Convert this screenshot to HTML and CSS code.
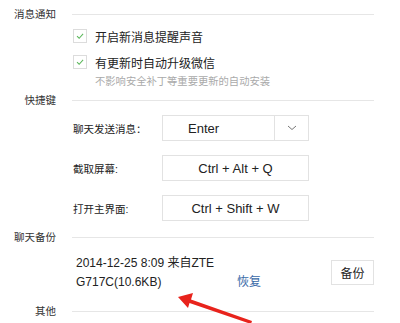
FILE: index.html
```html
<!DOCTYPE html>
<html lang="zh-CN">
<head>
<meta charset="utf-8">
<title>设置</title>
<link rel="stylesheet" href="styles.css">
</head>
<body>
<div class="page">
  <div class="sec-head"><span class="sec-label">消息通知</span><span class="sec-line"></span></div>
  <div class="check-row first">
    <span class="checkbox"><svg width="14" height="14" viewBox="0 0 14 14"><path d="M3.5 7.2 L6 9.6 L10.6 4.6" fill="none" stroke="#5cb85c" stroke-width="1.2"/></svg></span>
    <span class="check-text">开启新消息提醒声音</span>
  </div>
  <div class="check-row second">
    <span class="checkbox"><svg width="14" height="14" viewBox="0 0 14 14"><path d="M3.5 7.2 L6 9.6 L10.6 4.6" fill="none" stroke="#5cb85c" stroke-width="1.2"/></svg></span>
    <span class="check-text">有更新时自动升级微信</span>
  </div>
  <div class="hint">不影响安全补丁等重要更新的自动安装</div>

  <div class="sec-head head2"><span class="sec-label">快捷键</span><span class="sec-line"></span></div>
  <div class="key-row first-key">
    <span class="key-label">聊天发送消息：</span>
    <div class="key-box select">
      <span class="key-value left">Enter</span>
      <span class="key-drop"><svg width="10" height="6" viewBox="0 0 10 6"><path d="M1 1 L5 4.5 L9 1" fill="none" stroke="#777" stroke-width="1"/></svg></span>
    </div>
  </div>
  <div class="key-row">
    <span class="key-label">截取屏幕:</span>
    <div class="key-box"><span class="key-value">Ctrl + Alt + Q</span></div>
  </div>
  <div class="key-row">
    <span class="key-label">打开主界面:</span>
    <div class="key-box"><span class="key-value">Ctrl + Shift + W</span></div>
  </div>

  <div class="sec-head head3"><span class="sec-label">聊天备份</span><span class="sec-line"></span></div>
  <div class="backup">
    <div class="backup-text">2014-12-25 8:09 来自ZTE<br>G717C(10.6KB)</div>
    <a class="restore">恢复</a>
    <span class="spacer"></span>
    <button class="backup-btn">备份</button>
  </div>

  <div class="sec-head"><span class="sec-label">其他</span><span class="sec-line"></span></div>

  <svg class="arrow" width="400" height="323" viewBox="0 0 400 323">
    <path d="M178 297 L193 293 L191 299.5 L252 321 L251 324 L189.5 303 L188 308 Z" fill="#e8231c"/>
  </svg>
</div>
</body>
</html>
```

FILE: styles.css
```css
html, body {
  margin: 0;
  padding: 0;
  background: #ffffff;
}
body {
  width: 400px;
  height: 323px;
  overflow: hidden;
  font-family: "Liberation Sans", "Noto Sans CJK SC", sans-serif;
  color: #222;
}
.page {
  position: relative;
  padding-top: 7px;
  height: 316px;
}
.sec-head {
  display: flex;
  align-items: center;
  height: 14px;
}
.sec-label {
  width: 56px;
  text-align: right;
  font-size: 10.5px;
  line-height: 14px;
  color: #333;
  white-space: nowrap;
}
.sec-line {
  flex: 1;
  height: 1px;
  background: #e6e6e6;
  margin-left: 16px;
  margin-right: 26px;
}
.check-row {
  display: flex;
  align-items: center;
  height: 14px;
  padding-left: 73px;
}
.check-row.first { margin-top: 8px; }
.check-row.second { margin-top: 12px; }
.checkbox {
  width: 12px;
  height: 12px;
  border: 1px solid #dcdcdc;
  background: #fff;
  display: flex;
  align-items: center;
  justify-content: center;
}
.checkbox svg { display: block; }
.check-text {
  margin-left: 8px;
  font-size: 12px;
  color: #222;
  white-space: nowrap;
}
.hint {
  margin-top: 6px;
  padding-left: 95px;
  font-size: 10.3px;
  line-height: 14px;
  color: #aaa;
  white-space: nowrap;
}
.head2 { margin-top: 4px; }
.key-row {
  display: flex;
  align-items: center;
  height: 26px;
  padding-left: 73px;
  margin-top: 14px;
}
.key-row.first-key { margin-top: 8px; }
.key-label {
  width: 89px;
  font-size: 10.5px;
  color: #222;
  white-space: nowrap;
}
.key-box {
  width: 145px;
  height: 24px;
  border: 1px solid #e2e2e2;
  display: flex;
  align-items: center;
  justify-content: center;
  background: #fff;
}
.key-box.select { justify-content: flex-start; }
.key-value {
  font-size: 13px;
  color: #222;
  white-space: nowrap;
}
.key-value.left {
  flex: 1;
  padding-left: 25px;
}
.key-drop {
  width: 33px;
  height: 24px;
  border-left: 1px solid #e2e2e2;
  display: flex;
  align-items: center;
  justify-content: center;
}
.key-drop svg { display: block; }
.head3 { margin-top: 9px; }
.backup {
  display: flex;
  align-items: flex-start;
  height: 50px;
  margin-top: 10px;
  padding-left: 76px;
}
.backup-text {
  width: 161px;
  font-size: 12px;
  line-height: 19px;
  color: #222;
  white-space: nowrap;
}
.restore {
  margin-top: 19px;
  font-size: 12px;
  line-height: 19px;
  color: #3a6aa8;
  cursor: pointer;
}
.spacer { flex: 1; }
.backup-btn {
  margin-top: 6px;
  margin-right: 26px;
  width: 43px;
  height: 25px;
  padding: 0;
  border: 1px solid #e2e2e2;
  background: #fff;
  font-family: "Noto Sans CJK SC", sans-serif;
  font-size: 12px;
  color: #222;
}
.arrow {
  position: absolute;
  left: 0;
  top: 0;
  pointer-events: none;
}
```
